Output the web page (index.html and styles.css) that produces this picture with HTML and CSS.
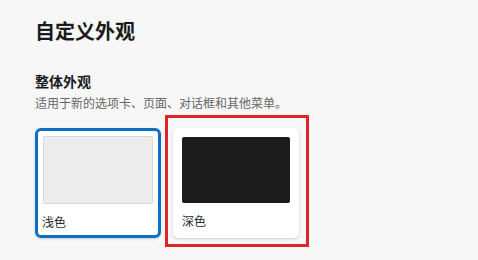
FILE: index.html
```html
<!DOCTYPE html>
<html lang="zh-CN">
<head>
<meta charset="utf-8">
<link rel="stylesheet" href="styles.css">
</head>
<body>
<main class="page">
  <h1 class="title">自定义外观</h1>
  <section class="section">
    <h2 class="section-title">整体外观</h2>
    <p class="section-desc">适用于新的选项卡、页面、对话框和其他菜单。</p>
    <div class="options">
      <div class="card card-selected">
        <div class="preview preview-light"></div>
        <div class="label">浅色</div>
      </div>
      <div class="card-wrap">
        <div class="card">
          <div class="preview preview-dark"></div>
          <div class="label">深色</div>
        </div>
        <div class="highlight"></div>
      </div>
    </div>
  </section>
</main>
</body>
</html>
```
FILE: styles.css
```css
html, body {
  margin: 0;
  padding: 0;
  background: #f7f7f7;
}
body {
  font-family: "Noto Sans CJK SC", "Noto Sans", sans-serif;
  color: #1b1b1b;
  min-height: 260px;
}
.page {
  padding: 17px 35px 22px 35px;
}
.title {
  margin: 0;
  font-size: 20px;
  line-height: 28px;
  font-weight: 700;
}
.section {
  margin-top: 26px;
}
.section-title {
  margin: 0;
  font-size: 14px;
  line-height: 20px;
  font-weight: 700;
}
.section-desc {
  margin: 3px 0 0 0;
  font-size: 12px;
  line-height: 18px;
  color: #666666;
}
.options {
  display: flex;
  gap: 12px;
  margin-top: 16px;
}
.card-wrap {
  position: relative;
}
.card {
  box-sizing: border-box;
  width: 126px;
  height: 110px;
  background: #ffffff;
  border: 1px solid #ffffff;
  border-radius: 5px;
  padding: 8px;
  box-shadow: 0 1px 3px rgba(0, 0, 0, 0.16);
}
.card-selected {
  border: 3px solid #0e6fc4;
  padding: 5px;
  border-radius: 6px;
}
.preview {
  height: 66px;
  border-radius: 2px;
}
.preview-light {
  background: #ececec;
  border: 1px solid #d6d6d6;
}
.preview-dark {
  background: #1c1c1c;
}
.label {
  margin-top: 10px;
  font-size: 12px;
  line-height: 16px;
  color: #2a2a2a;
}
.card-selected .label {
  margin-left: -1px;
}
.highlight {
  position: absolute;
  top: -13px;
  left: -8px;
  width: 144px;
  height: 132px;
  box-sizing: border-box;
  border: 3px solid #e0222b;
  pointer-events: none;
}
```
